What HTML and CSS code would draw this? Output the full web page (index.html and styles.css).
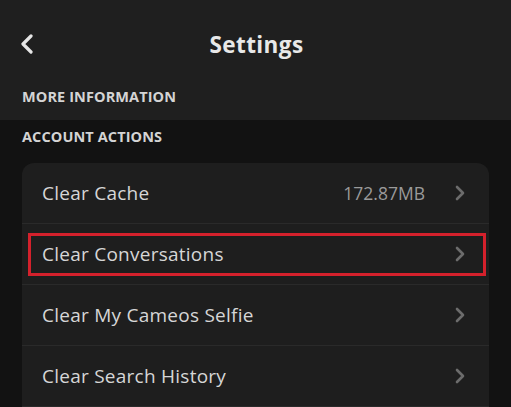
FILE: index.html
```html
<!DOCTYPE html>
<html>
<head>
<meta charset="utf-8">
<link rel="stylesheet" href="styles.css">
</head>
<body>
<div class="screen">
  <div class="top">
    <div class="nav">
      <svg class="back" width="14" height="20" viewBox="0 0 14 20"><path d="M11 2 L3 10 L11 18" fill="none" stroke="#e6e6e6" stroke-width="3.2" stroke-linecap="round" stroke-linejoin="round"/></svg>
      <div class="title">Settings</div>
    </div>
    <div class="label">MORE INFORMATION</div>
  </div>
  <div class="section">
    <div class="label">ACCOUNT ACTIONS</div>
    <div class="card">
      <div class="row">
        <span class="text">Clear Cache</span>
        <span class="value">172.87MB</span>
        <svg class="chev" width="10" height="16" viewBox="0 0 10 16"><path d="M2 2 L8 8 L2 14" fill="none" stroke="#6c6c6c" stroke-width="2.6" stroke-linecap="round" stroke-linejoin="round"/></svg>
      </div>
      <div class="row highlighted">
        <span class="text">Clear Conversations</span>
        <svg class="chev" width="10" height="16" viewBox="0 0 10 16"><path d="M2 2 L8 8 L2 14" fill="none" stroke="#6c6c6c" stroke-width="2.6" stroke-linecap="round" stroke-linejoin="round"/></svg>
        <div class="redbox"></div>
      </div>
      <div class="row">
        <span class="text">Clear My Cameos Selfie</span>
        <svg class="chev" width="10" height="16" viewBox="0 0 10 16"><path d="M2 2 L8 8 L2 14" fill="none" stroke="#6c6c6c" stroke-width="2.6" stroke-linecap="round" stroke-linejoin="round"/></svg>
      </div>
      <div class="row">
        <span class="text">Clear Search History</span>
        <svg class="chev" width="10" height="16" viewBox="0 0 10 16"><path d="M2 2 L8 8 L2 14" fill="none" stroke="#6c6c6c" stroke-width="2.6" stroke-linecap="round" stroke-linejoin="round"/></svg>
      </div>
    </div>
  </div>
</div>
</body>
</html>
```
FILE: styles.css
```css
html, body {
  margin: 0;
  padding: 0;
  background: #121212;
}
.screen {
  width: 511px;
  height: 407px;
  overflow: hidden;
  font-family: "Open Sans", Lato, sans-serif;
  background: #121212;
}
.top {
  background: #1f1f1f;
  height: 120px;
  box-sizing: border-box;
}
.nav {
  height: 88px;
  display: flex;
  align-items: center;
  justify-content: center;
  position: relative;
}
.back {
  position: absolute;
  left: 20px;
  top: 34px;
}
.title {
  color: #e8e8e8;
  font-size: 22.5px;
  font-weight: 700;
  letter-spacing: 0.4px;
  padding-left: 2px;
}
.label {
  color: #d4d4d4;
  font-size: 14.5px;
  font-weight: 700;
  line-height: 18px;
  letter-spacing: 0.1px;
  padding-left: 22px;
}
.section {
  padding-top: 8px;
}
.section .label {
  margin-bottom: 17px;
}
.card {
  margin: 0 22px;
  background: #1e1e1e;
  border-radius: 12px 12px 0 0;
}
.row {
  position: relative;
  height: 60px;
  display: flex;
  align-items: center;
  padding: 0 24px 0 20px;
  border-bottom: 1px solid #2a2a2a;
}
.text {
  flex: 1;
  color: #d6d6d6;
  font-size: 19px;
  letter-spacing: 0.25px;
}
.value {
  color: #9a9a9a;
  font-size: 17.5px;
  margin-right: 30px;
}
.chev {
  display: block;
}
.redbox {
  position: absolute;
  left: 6px;
  top: 9px;
  width: 458px;
  height: 43px;
  box-sizing: border-box;
  border: 3px solid #d4212c;
}
```
